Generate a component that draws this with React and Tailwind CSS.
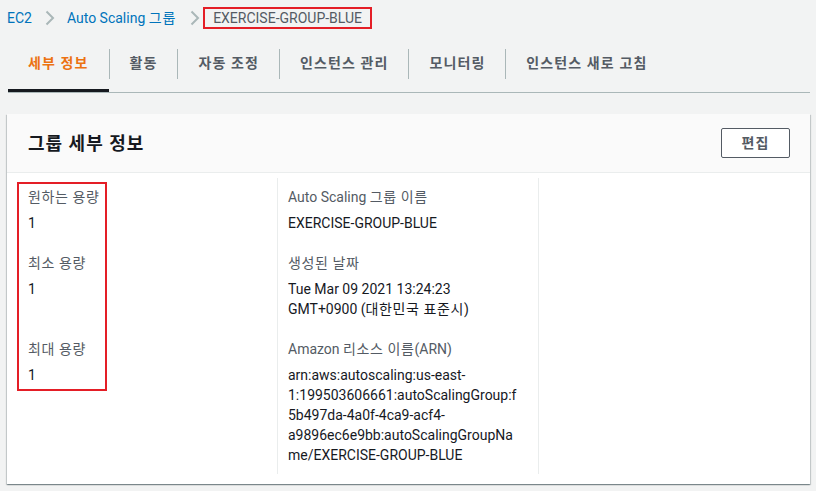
import React from 'react';

// ---------------------------------------------------------------------------
// Datos
// ---------------------------------------------------------------------------

const TABS = ['세부 정보', '활동', '자동 조정', '인스턴스 관리', '모니터링', '인스턴스 새로 고침'];

const ARN_LINES = [
  'arn:aws:autoscaling:us-east-',
  '1:199503606661:autoScalingGroup:f',
  '5b497da-4a0f-4ca9-acf4-',
  'a9896ec6e9bb:autoScalingGroupNa',
  'me/EXERCISE-GROUP-BLUE',
];

const FONT = { fontFamily: 'Roboto, "Noto Sans CJK KR", sans-serif' };

const Chevron = ({ className }) => (
  <svg className={className} width="10" height="16" viewBox="0 0 10 16" fill="none">
    <polyline points="1.5,1.5 8,8 1.5,14.5" stroke="#aab7b8" strokeWidth="2" />
  </svg>
);

function Field({ label, children, labelClass = '', valueClass = '' }) {
  return (
    <div>
      <div className={`text-[14px] leading-[20px] text-[#545b64] ${labelClass}`}>{label}</div>
      <div className={`mt-[6px] text-[14px] leading-[20px] text-[#16191f] ${valueClass}`}>{children}</div>
    </div>
  );
}

// ---------------------------------------------------------------------------
// App
// ---------------------------------------------------------------------------

export default function App() {
  return (
    <div className="min-h-[491px] bg-[#f2f3f3] pl-[7px] pr-[6px] pt-[7px]" style={FONT}>
      {/* ── Breadcrumb ── */}
      <nav className="flex items-center h-[22px] text-[14px]">
        <span className="text-[#0073bb]">EC2</span>
        <Chevron className="ml-[13px] mr-[12px]" />
        <span className="text-[#0073bb]">Auto Scaling <span className="tracking-[0.8px]">그룹</span></span>
        <Chevron className="ml-[14px] mr-[3px]" />
        <span className="flex items-center h-[22px] border-2 border-[#e41e26] px-[8px] text-[#545b64]">
          EXERCISE-GROUP-BLUE
        </span>
      </nav>

      {/* ── Tabs ── */}
      <div className="mt-[6px] flex items-center border-b border-[#aab7b8] ml-[1px]">
        {TABS.map((t, i) => (
          <React.Fragment key={t}>
            {i > 0 && <div className="w-px h-[30px] bg-[#aab7b8]" />}
            <div
              className={`relative flex items-center h-[57px] px-[20px] text-[14px] font-bold tracking-[1.1px] ${
                i === 0 ? 'text-[#ec7211]' : 'text-[#545b64]'
              }`}
            >
              {t}
              {i === 0 && <span className="absolute left-0 right-0 bottom-0 h-[3px] bg-[#16191f]" />}
            </div>
          </React.Fragment>
        ))}
      </div>

      {/* ── Card ── */}
      <section className="mt-[21px] bg-white shadow-[0_1px_1px_0_rgba(0,28,36,0.3),1px_1px_1px_0_rgba(0,28,36,0.15),-1px_1px_1px_0_rgba(0,28,36,0.15)]">
        <header className="flex items-center justify-between h-[59px] bg-[#fafafa] border-b border-[#eaeded] pl-[21px] pr-[20px]">
          <h2 className="text-[18px] font-bold tracking-[1px] text-[#16191f]">그룹 세부 정보</h2>
          <button className="w-[69px] h-[30px] border border-[#545b64] rounded-[2px] bg-white text-[14px] font-bold tracking-[1px] text-[#545b64]">
            편집
          </button>
        </header>

        <div className="flex pt-[5px] pb-[10px] pl-[21px]">
          <div className="w-[249px] pb-[10px]">
            <div className="mt-[4px] -ml-[11px] w-[90px] border-2 border-[#e41e26] pl-[9px] pt-[3px] pb-[4px] flex flex-col gap-[20px]">
              <Field label="원하는 용량" labelClass="tracking-[0.6px]">1</Field>
              <Field label="최소 용량" labelClass="tracking-[0.6px]" valueClass="min-h-[40px]">1</Field>
              <Field label="최대 용량" labelClass="tracking-[0.6px]">1</Field>
            </div>
          </div>

          <div className="w-[261px] border-l border-[#eaeded] pl-[10px] pt-[9px] pb-[9px] flex flex-col gap-[20px]">
            <Field label={<>Auto Scaling <span className="tracking-[0.6px]">그룹 이름</span></>}>
              EXERCISE-GROUP-BLUE
            </Field>
            <Field label="생성된 날짜" labelClass="tracking-[0.6px]">
              Tue Mar 09 2021 13:24:23
              <br />
              GMT+0900 (<span className="tracking-[0.6px]">대한민국 표준시</span>)
            </Field>
            <Field label={<>Amazon <span className="tracking-[0.6px]">리소스 이름</span>(ARN)</>}>
              {ARN_LINES.map((l) => (
                <span key={l} className="block whitespace-nowrap">{l}</span>
              ))}
            </Field>
          </div>

          <div className="flex-1 border-l border-[#eaeded]" />
        </div>
      </section>
    </div>
  );
}
